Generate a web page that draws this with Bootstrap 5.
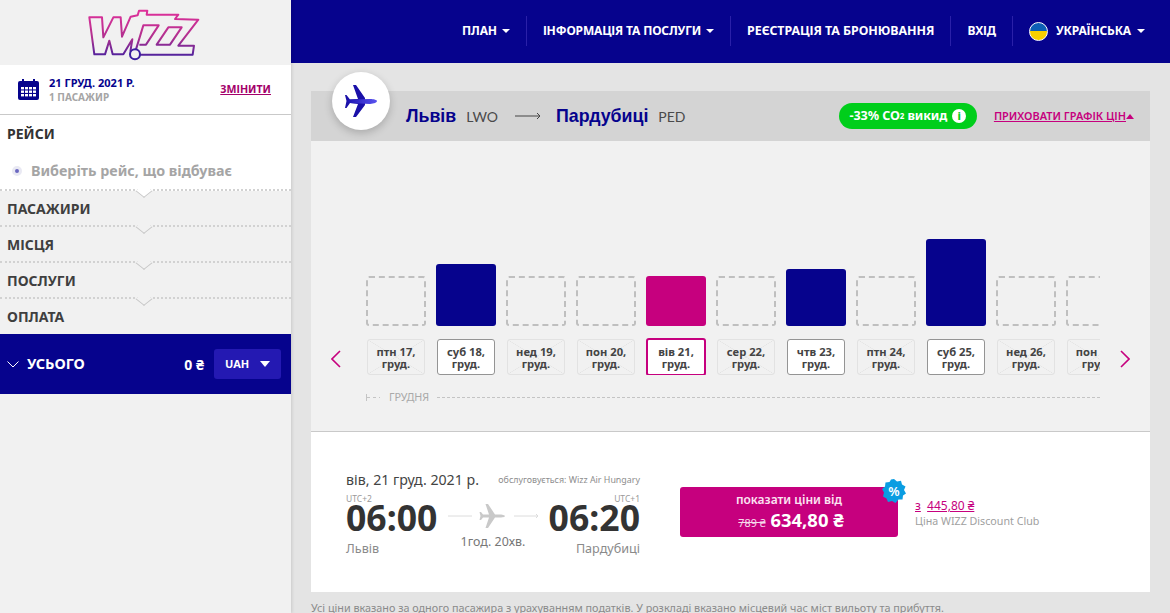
<!DOCTYPE html>
<html lang="uk">
<head>
  <meta charset="UTF-8">
  <meta name="viewport" content="width=device-width, initial-scale=1">
  <title>Wizz Air</title>
  <link href="https://cdn.jsdelivr.net/npm/bootstrap@5.3.0/dist/css/bootstrap.min.css" rel="stylesheet">
  <style>
    html, body { height: 100%; overflow: hidden; }
    body {
      font-family: "Noto Sans", "DejaVu Sans", sans-serif;
      background: #e4e4e4;
      color: #3a3a3a;
    }
    .wz-aside {
      width: 291px;
      height: 613px;
      background: #f1f1f1;
      box-shadow: 1px 0 3px rgba(0, 0, 0, .12);
      position: relative;
      z-index: 2;
    }
    .wz-logo { height: 65px; }
    .wz-trip { height: 50px; background: #fff; border-bottom: 1px solid #c9c9c9; padding: 0 20px 0 18px; }
    .wz-trip-icon { margin-right: 10px; }
    .wz-trip-date { font-size: 11px; font-weight: 700; color: #06038d; line-height: 14px; }
    .wz-trip-pax { font-size: 10px; font-weight: 700; color: #a5a5a5; line-height: 14px; }
    .wz-change { font-size: 10.6px; font-weight: 700; color: #a4006a; text-decoration: underline; }
    .wz-step {
      position: relative;
      height: 36px;
      padding: 9px 7px 0;
      font-size: 14px;
      line-height: 18px;
      font-weight: 700;
      color: #3f3f3f;
      border-bottom: 2px dotted #d2d2d2;
    }
    .wz-step::after {
      content: "";
      position: absolute;
      left: 137.5px;
      bottom: -8px;
      width: 12px;
      height: 12px;
      background: #f1f1f1;
      border-right: 1px solid #c4c4c4;
      border-bottom: 1px solid #c4c4c4;
      transform: scaleY(.8) rotate(45deg);
    }
    .wz-step-open { height: 76px; background: #fff; padding-top: 10px; color: #333; }
    .wz-step-open::after { background: #fff; }
    .wz-step-last { height: 35px; border-bottom: 0; }
    .wz-step-last::after { display: none; }
    .wz-sub { margin-top: 19px; padding-left: 5px; font-size: 14.3px; line-height: 18px; color: #a5a5a5; }
    .wz-dot { width: 10px; height: 10px; border-radius: 50%; background: #6a67c0; border: 3px solid #e9e9f3; margin-right: 9px; }
    .wz-total { height: 60px; background: #06038d; color: #fff; padding: 0 10px 0 7px; }
    .wz-total-label { font-size: 14.5px; font-weight: 700; }
    .wz-total-sum { font-size: 14px; font-weight: 700; margin-right: 10px; }
    .wz-cur { width: 67px; height: 30px; background: #2419b2; color: #fff; border: 0; border-radius: 3px; font-size: 11px; font-weight: 700; padding: 0 11px; }
    .wz-tri-down { width: 0; height: 0; border-left: 5px solid transparent; border-right: 5px solid transparent; border-top: 6px solid #fff; }

    .wz-top { height: 63px; background: #06038d; padding: 16px 25px 0 0; }
    .wz-top-item {
      height: 30px;
      padding: 0 16px;
      color: #fff;
      font-size: 12px;
      font-weight: 700;
      letter-spacing: -.15px;
      border-right: 1px solid #2a20a8;
      white-space: nowrap;
    }
    .wz-top-wide { font-size: 12.4px; letter-spacing: -.05px; }
    .wz-top-item:last-child { border-right: 0; padding-right: 0; }
    .wz-top-item.dropdown-toggle::after { margin-left: 6px; vertical-align: 2px; border-top-width: 4px; border-left-width: 4px; border-right-width: 4px; }
    .wz-top-item:nth-child(-n+2).dropdown-toggle::after { margin-left: 5px; }
    .wz-flag { width: 19px; height: 19px; border-radius: 50%; border: 1px solid #fff; background: linear-gradient(#0d5fb5 50%, #f9cf00 50%); margin-right: 8px; }

    .wz-panel { width: 839px; margin: 28px 0 0 20px; position: relative; }
    .wz-route { height: 50px; background: #d4d4d4; padding: 0 16px 0 95px; }
    .wz-city { font-family: "Liberation Sans", Arial, sans-serif; font-size: 17.8px; font-weight: 700; color: #06038d; }
    .wz-iata { font-family: Lato, sans-serif; font-size: 14px; color: #4a4a4a; margin-left: 10px; }
    .wz-route-arrow { margin: 0 15px 0 17px; }
    .wz-badge-plane {
      position: absolute;
      left: 21px;
      top: -19px;
      width: 58px;
      height: 58px;
      border-radius: 50%;
      background: #fff;
      box-shadow: 0 3px 8px rgba(0, 0, 0, .2);
    }
    .wz-co2 {
      height: 26px;
      width: 138px;
      border-radius: 13px;
      background: #00ce1b;
      color: #fff;
      font-size: 12.6px;
      font-weight: 700;
      letter-spacing: -.1px;
    }
    .wz-co2 sub { font-size: 8px; bottom: 0; }
    .wz-info { width: 14px; height: 14px; border-radius: 50%; background: #fff; color: #00ce1b; font-size: 11px; line-height: 14px; text-align: center; font-weight: 800; margin-left: 5px; }
    .wz-hide { font-size: 10.95px; color: #c6007e; text-decoration: underline; margin-left: 17px; white-space: nowrap; font-weight: 600; }
    .wz-tri-up { display: inline-block; width: 0; height: 0; border-left: 4px solid transparent; border-right: 4px solid transparent; border-bottom: 5px solid #c6007e; vertical-align: 1px; }

    .wz-chart { height: 291px; background: #f1f1f1; border-bottom: 1px solid #c9c9c9; padding: 98px 0 0 55px; position: relative; }
    .wz-scroll { width: 734px; overflow: hidden; }
    .wz-days { width: 900px; gap: 10px; }
    .wz-day { width: 60px; flex: none; }
    .wz-bars { height: 87px; }
    .wz-bar { width: 60px; border-radius: 3px; }
    .wz-bar-none { height: 50px; border: 2px dashed #bfbfbf; }
    .wz-bar-navy { background: #06038d; }
    .wz-bar-pink { background: #c6007e; }
    .wz-tile {
      width: 58px;
      height: 36px;
      margin: 13px 1px 0;
      border-radius: 3px;
      font-size: 11.2px;
      line-height: 12px;
      font-weight: 700;
      text-align: center;
      padding-top: 6px;
      color: #444;
      white-space: nowrap;
      border: 1px solid #e2e2e2;
      background:
        linear-gradient(to top right, transparent calc(50% - .5px), #e2e2e2 50%, transparent calc(50% + .5px)),
        linear-gradient(to bottom right, transparent calc(50% - .5px), #e2e2e2 50%, transparent calc(50% + .5px));
    }
    .wz-tile-open { background: #fff; border-color: #949494; }
    .wz-tile-sel { width: 60px; height: 38px; margin: 12px 0 -1px; background: #fff; border: 2px solid #c6007e; }
    .wz-arrow { position: absolute; top: 209px; }
    .wz-month { width: 734px; margin-top: 15px; font-size: 10.8px; line-height: 14px; color: #a9a9a9; }
    .wz-month-tick {
      width: 14px;
      height: 7px;
      margin-right: 9px;
      border-left: 1px solid #c4c4c4;
      background: repeating-linear-gradient(to right, #c4c4c4 0 3px, transparent 3px 6px) center / 100% 1px no-repeat;
    }
    .wz-month-line { border-top: 1px dashed #c4c4c4; margin-left: 8px; }

    .wz-flight { height: 160px; background: #fff; padding: 36px 0 0 35px; }
    .wz-times { width: 294px; }
    .wz-date { font-size: 14.2px; line-height: 22px; color: #444; margin-top: 1px; }
    .wz-operated { font-size: 8.9px; color: #8d8d8d; white-space: nowrap; }
    .wz-utc { font-size: 8.5px; line-height: 10px; color: #9a9a9a; margin-top: 3px; }
    .wz-hour { font-size: 35.6px; line-height: 36px; margin-top: -5px; font-weight: 700; color: #333; }
    .wz-place { font-size: 12.6px; line-height: 16px; color: #8a8a8a; margin-top: 6px; }
    .wz-dur { width: 102px; padding-top: 12px; text-align: center; font-size: 12.4px; color: #777; white-space: nowrap; line-height: 16px; }
    .wz-dur-icon { margin-bottom: 5px; }
    .wz-buy {
      position: relative;
      width: 218px;
      height: 50px;
      margin: 19px 0 0 40px;
      background: #c6007e;
      border: 0;
      border-radius: 3px;
      color: #fff;
      padding: 2px 0 3px;
      line-height: 1;
    }
    .wz-buy:hover { background: #c6007e; color: #fff; }
    .wz-buy-top { font-size: 12px; font-weight: 600; line-height: 18px; color: #fbe3f2; }
    .wz-buy-row { line-height: 21px; padding-left: 4px; }
    .wz-buy-old { font-size: 10.8px; text-decoration: line-through; opacity: .85; margin-right: 5px; }
    .wz-buy-new { font-size: 18.4px; font-weight: 700; }
    .wz-star { position: absolute; right: -8px; top: -8px; }
    .wz-club { margin: 30px 0 0 17px; }
    .wz-club-price { font-size: 12px; line-height: 16px; color: #c6007e; }
    .wz-club-price a { color: #c6007e; }
    .wz-club-note { font-size: 10.7px; line-height: 14px; color: #a0a0a0; white-space: nowrap; }
    .wz-foot { margin-top: 8px; font-size: 10.8px; color: #8a8a8a; white-space: nowrap; }
  </style>
</head>

<body>
  <div class="d-flex">
    <!-- sidebar -->
    <aside class="wz-aside flex-shrink-0">
      <div class="wz-logo d-flex">
        <svg width="291" height="65" viewBox="0 0 873 195" aria-label="Wizz">
          <defs>
            <linearGradient id="logoGrad" x1="0" y1="30" x2="0" y2="180" gradientUnits="userSpaceOnUse">
              <stop offset="0" stop-color="#e0309a"/>
              <stop offset=".55" stop-color="#b0308f"/>
              <stop offset="1" stop-color="#3b1fa0"/>
            </linearGradient>
          </defs>
          <g fill="none" stroke="url(#logoGrad)" stroke-width="6" stroke-linejoin="round">
            <path d="M391 155 L397 118 L370 163 L338 163 L328 122 L315 163 L283 163 L268 52 L306 52 L310 112 L340 52 L362 52 L366 110 L392 50 L413 46 L417 32 L442 32 L440 44 L535 44 L525 57 L595 59 L535 137 L582 137 L578 164 L420 164"/>
            <path d="M408 148 L430 76 L476 76 L438 134 L418 134"/>
            <path d="M505 82 L545 82 L510 134 L470 134 Z"/>
            <circle cx="405" cy="163" r="15" stroke="#3b1fa0" stroke-width="6"/>
          </g>
        </svg>
      </div>
      <div class="wz-trip d-flex align-items-center">
        <svg width="21" height="21" viewBox="0 0 21 21" class="wz-trip-icon flex-shrink-0">
          <rect x="0" y="2" width="21" height="19" rx="2" fill="#06038d"/>
          <rect x="4" y="0" width="2" height="4" fill="#06038d"/>
          <rect x="15" y="0" width="2" height="4" fill="#06038d"/>
          <g fill="#fff">
            <rect x="3" y="8" width="3" height="2.4"/><rect x="7" y="8" width="3" height="2.4"/><rect x="11" y="8" width="3" height="2.4"/><rect x="15" y="8" width="3" height="2.4"/>
            <rect x="3" y="11.5" width="3" height="2.4"/><rect x="7" y="11.5" width="3" height="2.4"/><rect x="11" y="11.5" width="3" height="2.4"/><rect x="15" y="11.5" width="3" height="2.4"/>
            <rect x="3" y="15" width="3" height="2.4"/><rect x="7" y="15" width="3" height="2.4"/><rect x="11" y="15" width="3" height="2.4"/><rect x="15" y="15" width="3" height="2.4"/>
          </g>
        </svg>
        <div class="flex-grow-1">
          <div class="wz-trip-date">21 ГРУД. 2021 Р.</div>
          <div class="wz-trip-pax">1 ПАСАЖИР</div>
        </div>
        <a href="#" class="wz-change">ЗМІНИТИ</a>
      </div>
      <div class="wz-step wz-step-open">
        РЕЙСИ
        <div class="wz-sub d-flex align-items-center"><span class="wz-dot"></span>Виберіть рейс, що відбуває</div>
      </div>
      <div class="wz-step">ПАСАЖИРИ</div>
      <div class="wz-step">МІСЦЯ</div>
      <div class="wz-step">ПОСЛУГИ</div>
      <div class="wz-step wz-step-last">ОПЛАТА</div>
      <div class="wz-total d-flex align-items-center">
        <svg width="12" height="7" viewBox="0 0 12 7" class="me-2"><path d="M.5 .5 L6 6 L11.5 .5" fill="none" stroke="#fff"/></svg>
        <span class="wz-total-label flex-grow-1">УСЬОГО</span>
        <span class="wz-total-sum">0 ₴</span>
        <button class="wz-cur d-flex align-items-center justify-content-between">UAH <span class="wz-tri-down"></span></button>
      </div>
    </aside>

    <!-- main -->
    <div class="flex-grow-1">
      <nav class="wz-top d-flex justify-content-end">
        <a class="wz-top-item d-flex align-items-center text-decoration-none dropdown-toggle" href="#">ПЛАН</a>
        <a class="wz-top-item d-flex align-items-center text-decoration-none dropdown-toggle" href="#">ІНФОРМАЦІЯ ТА ПОСЛУГИ</a>
        <a class="wz-top-item wz-top-wide d-flex align-items-center text-decoration-none" href="#">РЕЄСТРАЦІЯ ТА БРОНЮВАННЯ</a>
        <a class="wz-top-item d-flex align-items-center text-decoration-none" href="#">ВХІД</a>
        <a class="wz-top-item d-flex align-items-center text-decoration-none dropdown-toggle" href="#"><span class="wz-flag"></span>УКРАЇНСЬКА</a>
      </nav>

      <div class="wz-panel">
        <div class="wz-badge-plane d-flex align-items-center justify-content-center">
          <svg width="32" height="32" viewBox="0 0 32 32">
            <defs>
              <linearGradient id="planeGrad" x1="0" y1="0" x2="1" y2="0">
                <stop offset="0" stop-color="#1a10b0"/><stop offset="1" stop-color="#5a54f0"/>
              </linearGradient>
            </defs>
            <path d="M20 13 L11 0 L8 0 L13 14 L5 14.500 L1.500 10 L0 10 L1.500 16 L0 23 L1.500 23 L5 18 L13 19 L8 32 L11 32 L20 20 Z" fill="#1a10a8"/>
            <path d="M32 16 C32 15 29 14 25 14 L5 14.500 L1.500 16 L5 18 L25 19 C29 18.500 32 17.500 32 16 Z" fill="url(#planeGrad)"/>
          </svg>
        </div>
        <div class="wz-route d-flex align-items-center">
          <span class="wz-city">Львів</span><span class="wz-iata">LWO</span>
          <svg width="26" height="8" viewBox="0 0 26 8" class="wz-route-arrow"><path d="M0 4 H25 M22 1 L25 4 L22 7" fill="none" stroke="#444"/></svg>
          <span class="wz-city">Пардубиці</span><span class="wz-iata">PED</span>
          <span class="wz-co2 d-flex align-items-center justify-content-center ms-auto">-33% CO<sub>2</sub>&nbsp;викид<span class="wz-info">i</span></span>
          <a href="#" class="wz-hide">ПРИХОВАТИ ГРАФІК ЦІН<span class="wz-tri-up"></span></a>
        </div>

        <div class="wz-chart">
          <svg class="wz-arrow" style="left:20px" width="10" height="18" viewBox="0 0 10 18"><path d="M9 1 L1 9 L9 17" fill="none" stroke="#c6007e" stroke-width="1.6"/></svg>
          <svg class="wz-arrow" style="left:809px" width="10" height="18" viewBox="0 0 10 18"><path d="M1 1 L9 9 L1 17" fill="none" stroke="#c6007e" stroke-width="1.6"/></svg>
          <div class="wz-scroll">
            <div class="wz-days d-flex">
              <div class="wz-day"><div class="wz-bars d-flex align-items-end"><div class="wz-bar wz-bar-none"></div></div><div class="wz-tile">птн 17,<br>груд.</div></div>
              <div class="wz-day"><div class="wz-bars d-flex align-items-end"><div class="wz-bar wz-bar-navy" style="height:62px"></div></div><div class="wz-tile wz-tile-open">суб 18,<br>груд.</div></div>
              <div class="wz-day"><div class="wz-bars d-flex align-items-end"><div class="wz-bar wz-bar-none"></div></div><div class="wz-tile">нед 19,<br>груд.</div></div>
              <div class="wz-day"><div class="wz-bars d-flex align-items-end"><div class="wz-bar wz-bar-none"></div></div><div class="wz-tile">пон 20,<br>груд.</div></div>
              <div class="wz-day"><div class="wz-bars d-flex align-items-end"><div class="wz-bar wz-bar-pink" style="height:50px"></div></div><div class="wz-tile wz-tile-sel">вів 21,<br>груд.</div></div>
              <div class="wz-day"><div class="wz-bars d-flex align-items-end"><div class="wz-bar wz-bar-none"></div></div><div class="wz-tile">сер 22,<br>груд.</div></div>
              <div class="wz-day"><div class="wz-bars d-flex align-items-end"><div class="wz-bar wz-bar-navy" style="height:57px"></div></div><div class="wz-tile wz-tile-open">чтв 23,<br>груд.</div></div>
              <div class="wz-day"><div class="wz-bars d-flex align-items-end"><div class="wz-bar wz-bar-none"></div></div><div class="wz-tile">птн 24,<br>груд.</div></div>
              <div class="wz-day"><div class="wz-bars d-flex align-items-end"><div class="wz-bar wz-bar-navy" style="height:87px"></div></div><div class="wz-tile wz-tile-open">суб 25,<br>груд.</div></div>
              <div class="wz-day"><div class="wz-bars d-flex align-items-end"><div class="wz-bar wz-bar-none"></div></div><div class="wz-tile">нед 26,<br>груд.</div></div>
              <div class="wz-day"><div class="wz-bars d-flex align-items-end"><div class="wz-bar wz-bar-none"></div></div><div class="wz-tile">пон 27,<br>груд.</div></div>
            </div>
          </div>
          <div class="wz-month d-flex align-items-center">
            <span class="wz-month-tick"></span>ГРУДНЯ<span class="wz-month-line flex-grow-1"></span>
          </div>
        </div>

        <div class="wz-flight d-flex">
          <div class="wz-times">
            <div class="d-flex justify-content-between align-items-center">
              <span class="wz-date">вів, 21 груд. 2021 р.</span>
              <span class="wz-operated">обслуговується: Wizz Air Hungary</span>
            </div>
            <div class="d-flex justify-content-between">
              <div>
                <div class="wz-utc">UTC+2</div>
                <div class="wz-hour">06:00</div>
                <div class="wz-place">Львів</div>
              </div>
              <div class="wz-dur">
                <svg width="90" height="26" viewBox="0 0 90 26" class="wz-dur-icon d-block mx-auto">
                  <path d="M0 13 H24 M66 13 H90 M88 11 L90 13 L88 15" fill="none" stroke="#dcdcdc"/>
                  <path d="M57 13 C57 12 54 11.4 51 11.4 L47 11.4 L40 1 L37.500 1 L41 11.400 L35 11.600 L33 9 L31.500 9 L32.500 13 L31.500 17 L33 17 L35 14.500 L41 14.500 L37.500 25 L40 25 L47 14.500 L51 14.500 C54 14.500 57 14 57 13 Z" fill="#c9c9c9"/>
                </svg>
                1год. 20хв.
              </div>
              <div class="text-end">
                <div class="wz-utc">UTC+1</div>
                <div class="wz-hour">06:20</div>
                <div class="wz-place">Пардубиці</div>
              </div>
            </div>
          </div>
          <button class="wz-buy btn">
            <span class="wz-buy-top d-block">показати ціни від</span>
            <span class="wz-buy-row d-block"><span class="wz-buy-old">789 ₴</span><span class="wz-buy-new">634,80 ₴</span></span>
            <svg class="wz-star" width="24" height="24" viewBox="0 0 24 24">
              <path d="M12 0 L15 2.500 L19 1.800 L20 5.500 L23.500 7.500 L22 11 L24 14.500 L21 16.500 L20.500 20.500 L16.500 20.500 L13.500 24 L10 22 L6 23 L4.500 19.500 L1 17.500 L2 13.500 L0 10 L3 7.500 L3.500 3.500 L7.500 3 L9 .5 Z" fill="#0a9de2"/>
              <text x="12" y="16.500" text-anchor="middle" font-family="Noto Sans, sans-serif" font-size="13" font-weight="600" fill="#fff">%</text>
            </svg>
          </button>
          <div class="wz-club">
            <div class="wz-club-price"><a href="#">з</a>&nbsp;&nbsp;<a href="#">445,80 ₴</a></div>
            <div class="wz-club-note">Ціна WIZZ Discount Club</div>
          </div>
        </div>
        <div class="wz-foot">Усі ціни вказано за одного пасажира з урахуванням податків. У розкладі вказано місцевий час міст вильоту та прибуття.</div>
      </div>
    </div>
  </div>

  <script src="https://cdn.jsdelivr.net/npm/bootstrap@5.3.0/dist/js/bootstrap.bundle.min.js"></script>
</body>
</html>
